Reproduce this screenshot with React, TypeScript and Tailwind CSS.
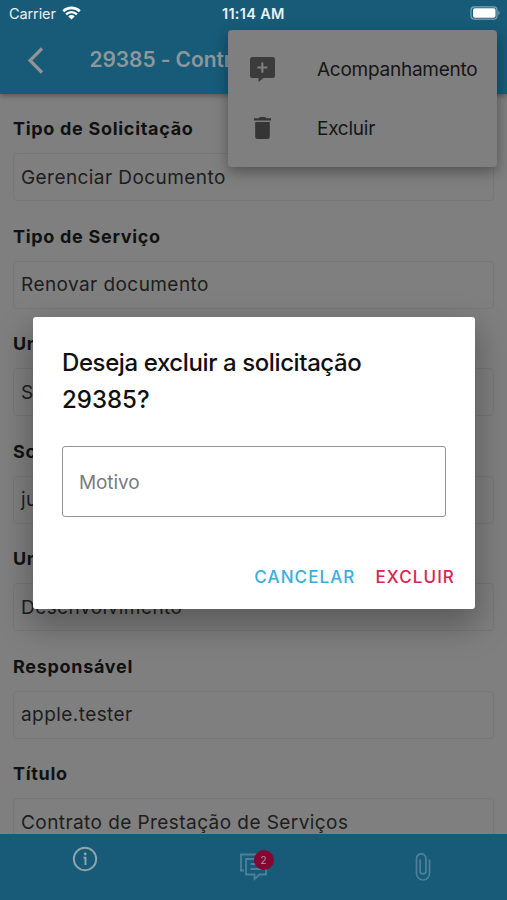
import React from "react";

const fields = [
  { label: "Tipo de Solicitação", value: "Gerenciar Documento" },
  { label: "Tipo de Serviço", value: "Renovar documento" },
  { label: "Un", value: "S" },
  { label: "So", value: "ju" },
  { label: "Un", value: "Desenvolvimento" },
  { label: "Responsável", value: "apple.tester" },
  { label: "Título", value: "Contrato de Prestação de Serviços" },
];

function StatusBar() {
  return (
    <div className="relative flex h-[28px] items-center justify-between pl-[9px] pr-[6px] text-[#e9f1f5]">
      <div className="flex items-center gap-[6px]">
        <span className="text-[14.5px] tracking-[-0.1px]">Carrier</span>
        <svg className="mt-[-2px] h-[14px] w-[19px]" viewBox="0 0 19 14" fill="none" stroke="#fff">
          <path d="M1.2 5.2a12 12 0 0 1 16.6 0" strokeWidth="2.6" />
          <path d="M4.1 8.3a7.8 7.8 0 0 1 10.8 0" strokeWidth="2.4" />
          <path d="M9.5 13.6 6.3 10.4a4.6 4.6 0 0 1 6.4 0z" fill="#fff" stroke="none" />
        </svg>
      </div>
      <span className="absolute left-[222px] text-[14.5px] font-semibold tracking-[0.3px] whitespace-nowrap">
        11:14 AM
      </span>
      <svg className="mt-[-2px] h-[14px] w-[31px]" viewBox="0 0 31 14" fill="none">
        <rect x="1" y="0.8" width="26" height="12.4" rx="3.5" stroke="#7fa5b6" strokeWidth="1.2" />
        <rect x="3" y="2.3" width="22.5" height="9.4" rx="1.8" fill="#fff" />
        <path d="M28.4 4.8c1.6.6 1.6 3.8 0 4.4z" fill="#7fa5b6" />
      </svg>
    </div>
  );
}

function Field({ label, value }: { label: string; value: string }) {
  return (
    <div className="mb-[23.5px]">
      <div className="h-[36px] text-[18px] leading-[24px] font-bold tracking-[0.7px] whitespace-nowrap text-[#111]">
        {label}
      </div>
      <div className="flex h-[48px] items-center rounded-[4px] border border-[#777] pt-[2px] pl-[7px] text-[19px] tracking-[0.43px] whitespace-nowrap text-[#1d1d1d]">
        {value}
      </div>
    </div>
  );
}

function ActionMenu() {
  return (
    <div className="absolute top-[30px] left-[228px] z-10 h-[137px] w-[269px] rounded-[4px] bg-[#7f7f7f] pt-[10px] text-[19px] tracking-[-0.25px] text-[#161616] shadow-[0_5px_14px_rgba(0,0,0,0.35)]">
      <div className="flex h-[59px] items-center pl-[22px]">
        <svg className="mt-[-1px] h-[25px] w-[25px]" viewBox="0 0 25 25">
          <path
            fill="#3b3b3b"
            fillRule="evenodd"
            d="M2.5 0h20A2.5 2.5 0 0 1 25 2.5v16a2.5 2.5 0 0 1-2.5 2.5H13.5L8.5 25v-4h-6A2.5 2.5 0 0 1 0 18.5v-16A2.5 2.5 0 0 1 2.5 0zM11.3 5.5v4H7.3v2.1h4v4.1h2.1v-4.1h4V9.5h-4v-4z"
          />
        </svg>
        <span className="ml-[42px] pt-[2px]">Acompanhamento</span>
      </div>
      <div className="flex h-[59px] items-center pl-[26px]">
        <svg className="mt-[-1px] h-[22px] w-[17px]" viewBox="0 0 17 22" fill="#353535">
          <path d="M0 1.2h4.7L6 0h5l1.3 1.2H17v2.2H0z" />
          <path d="M1.2 5h14.6v14.8a2.2 2.2 0 0 1-2.2 2.2H3.4a2.2 2.2 0 0 1-2.2-2.2z" />
        </svg>
        <span className="ml-[46px] pt-[2px]">Excluir</span>
      </div>
    </div>
  );
}

function DeleteDialog() {
  return (
    <div className="absolute top-[317px] left-[33px] z-20 flex h-[292px] w-[442px] flex-col rounded-[3px] bg-white px-[29px] pt-[27px] shadow-[0_14px_32px_4px_rgba(0,0,0,0.28)]">
      <h2 className="text-[24px] leading-[37px] font-medium tracking-[-0.4px] whitespace-nowrap text-[#101010]">
        Deseja excluir a solicitação
        <br />
        <span className="tracking-[0px]">29385?</span>
      </h2>
      <div className="mt-[28px] flex h-[71px] w-[384px] shrink-0 items-center rounded-[3px] border-[1.5px] border-[#949494] pt-[3px] pl-[16px] text-[19px] tracking-[-0.1px] text-[#7c7c7c]">
        Motivo
      </div>
      <div className="mt-[48px] mr-[-9px] flex justify-end gap-[20px] text-[17px] leading-[24px] font-medium tracking-[1.1px]">
        <button className="text-[#38aee0]">CANCELAR</button>
        <button className="text-[#dc2450]">EXCLUIR</button>
      </div>
    </div>
  );
}

function TabBar() {
  return (
    <div className="flex h-[66px] shrink-0 bg-[#175b78]">
      <div className="flex flex-1 justify-center pt-[12px]">
        <svg className="h-[26px] w-[26px]" viewBox="0 0 26 26" fill="none" stroke="#91a5ad">
          <circle cx="13" cy="13" r="11.2" strokeWidth="1.9" />
          <path d="M11.5 11.7h2v7.3" strokeWidth="1.9" />
          <circle cx="13.2" cy="8" r="1.4" fill="#91a5ad" stroke="none" />
        </svg>
      </div>
      <div className="flex flex-1 justify-center pt-[19px]">
        <div className="relative h-[28px] w-[28px]">
          <svg className="h-[28px] w-[28px]" viewBox="0 0 28 28" fill="none" stroke="#4d8199" strokeWidth="1.8">
            <path d="M4 17.5H1V1.5h21V5" />
            <path d="M6 6h20v15.500H19.5L14.5 26v-4.5H6z" />
            <path d="M10.5 11h11M10.5 16h11" />
          </svg>
          <span className="absolute top-[-3px] left-[14px] flex h-[20px] w-[20px] items-center justify-center rounded-full bg-[#850633] text-[10px] text-[#a896a0]">
            2
          </span>
        </div>
      </div>
      <div className="flex flex-1 justify-center pt-[19px]">
        <svg
          className="h-[28px] w-[16px]"
          viewBox="0 0 16 28"
          fill="none"
          stroke="#4d8199"
          strokeWidth="1.7"
          strokeLinecap="round"
        >
          <path d="M14.5 7v13.5a6.5 6.5 0 0 1-13 0V5.5a4.7 4.7 0 0 1 9.4 0V18a2.9 2.9 0 0 1-5.8 0V7" />
        </svg>
      </div>
    </div>
  );
}

export default function App() {
  return (
    <div className="relative flex h-[900px] w-[507px] flex-col overflow-hidden bg-[#7f7f7f] font-['Inter',sans-serif]">
      <header className="relative h-[94px] shrink-0 bg-[#175b78] shadow-[0_2px_5px_rgba(0,0,0,0.3)]">
        <StatusBar />
        <div className="flex h-[64px] items-center pl-[27px]">
          <svg className="h-[27px] w-[17px]" viewBox="0 0 17 27" fill="none" stroke="#939393" strokeWidth="3.2">
            <path d="M15 1.5 3 13.5l12 12" />
          </svg>
          <h1 className="ml-[45.5px] text-[21px] font-semibold tracking-[-0.1px] whitespace-nowrap text-[#8c979c]">
            29385 - Contr
          </h1>
        </div>
      </header>
      <main className="min-h-0 flex-1 overflow-hidden pt-[23px] pr-[13px] pl-[13px]">
        {fields.map((field, i) => (
          <Field key={i} label={field.label} value={field.value} />
        ))}
      </main>
      <TabBar />
      <ActionMenu />
      <DeleteDialog />
    </div>
  );
}
